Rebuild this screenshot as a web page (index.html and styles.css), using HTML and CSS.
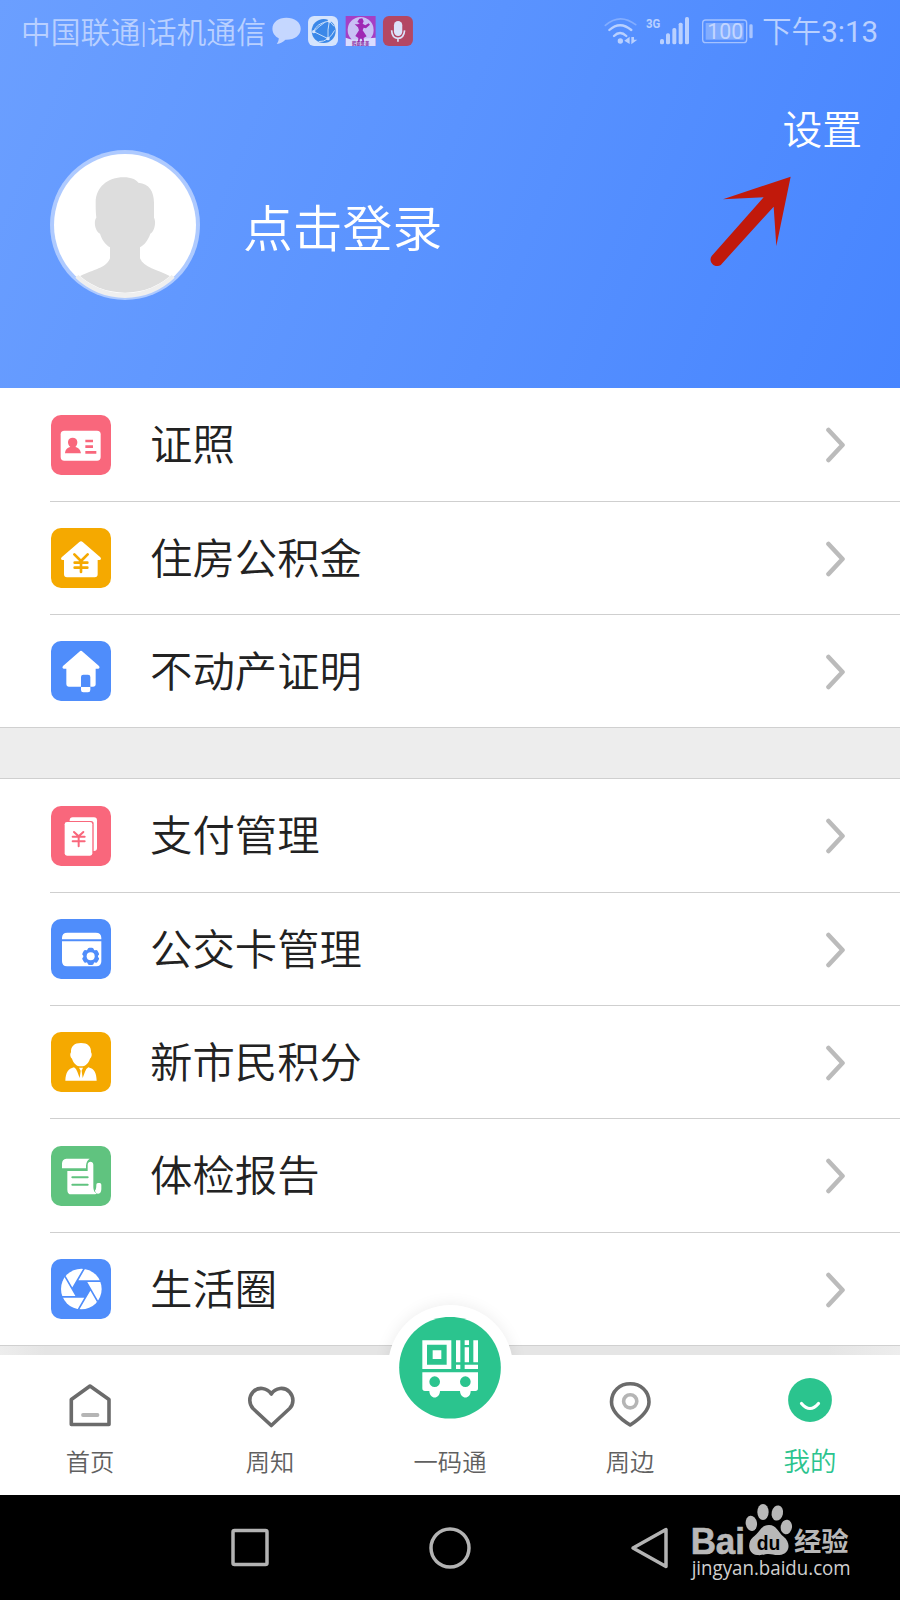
FILE: index.html
```html
<!DOCTYPE html>
<html lang="zh-CN">
<head>
<meta charset="utf-8">
<title>我的</title>
<link rel="stylesheet" href="styles.css">
</head>
<body>
<svg width="0" height="0" class="defs">
  <symbol id="chevron" viewBox="0 0 20 36"><path d="M2.500 3 L16.500 18 L2.500 33" fill="none" stroke="#bbb" stroke-width="4.600" stroke-linecap="round" stroke-linejoin="round"/></symbol>
</svg>
<div class="screen">
  <header class="header">
    <div class="status">
      <span class="carrier">中国联通|话机通信</span>
      <svg class="notices" viewBox="0 0 435 100">
        <path d="M43 5C19 5 1 19 1 38c0 13 8 23 19 29 0 8-3 13-6 17 11-2 20-6 26-13 27 1 46-13 46-33S67 5 43 5z" fill="#c5d7ff"/>
        <rect x="108" y="0" width="90" height="90" rx="18" fill="#d5e4fd"/>
        <circle cx="155" cy="45" r="36" fill="#3b88e8"/>
        <path d="M125 47 Q132 22 172 15 M125 47 L168 68 M172 15 Q166 42 168 68 M125 47 Q140 31 160 18 M168 68 Q180 58 188 43 M140 77 Q155 78 168 68 M172 15 L186 31" fill="none" stroke="#c5ddfa" stroke-width="3"/>
        <g fill="#d5e4fd"><circle cx="125" cy="47" r="5"/><circle cx="172" cy="15" r="5"/><circle cx="168" cy="68" r="5"/></g>
        <rect x="221" y="0" width="90" height="90" fill="#a63fc4"/>
        <circle cx="266" cy="42" r="39" fill="#c9c0f5"/>
        <path d="M221 65 Q240 74 266 70 T311 65 V90 H221Z" fill="#dadcff"/>
        <path d="M262 8 L271 7 L275 16 L272 23 L280 28 L290 22 L294 26 L282 37 L275 35 L272 43 L284 61 L275 66 L276 78 H272 L269 68 H264 L262 78 H258 L259 66 L250 60 L261 43 L258 34 L248 25 L258 25 L263 22 L256 18Z" fill="#9f28b4"/>
        <text x="240" y="86" class="badge-text">韩亚医美</text>
        <rect x="333" y="0" width="90" height="90" rx="18" fill="#b44763"/>
        <rect x="366" y="15" width="25" height="45" rx="12.5" fill="#dce3fa"/>
        <path d="M359 43 Q360 67 378 67 T398 43 M378 67 V77" fill="none" stroke="#dce3fa" stroke-width="5"/>
      </svg>
      <svg class="signals" viewBox="0 0 450 90">
        <g fill="none" stroke="#b9d0ff" stroke-width="7" stroke-linecap="round">
          <path d="M4 28 Q48 -10 95 26" stroke="#83adff" stroke-width="5"/>
          <path d="M16 42 Q48 13 82 42"/><path d="M30 60 Q48 42 67 60"/>
        </g>
        <circle cx="49" cy="75" r="8" fill="#b9d0ff"/>
        <path d="M61 74 L77 62 V84Z M82 63 V85 L100 71 L90 71 V63Z" fill="#b9d0ff"/>
        <text x="126" y="36" class="net" textLength="43" lengthAdjust="spacingAndGlyphs">3G</text>
        <g fill="#b9d0ff"><rect x="168" y="69" width="12" height="16" rx="5"/><rect x="186" y="52" width="12" height="33" rx="5"/><rect x="205" y="36" width="12" height="49" rx="5"/><rect x="224" y="20" width="12" height="65" rx="5"/><rect x="243" y="3" width="12" height="82" rx="5"/></g>
        <rect x="296" y="12" width="132" height="68" rx="9" fill="none" stroke="#a4c2ff" stroke-width="4"/>
        <rect x="305" y="21" width="114" height="50" fill="#82adff"/>
        <rect x="436" y="25" width="10" height="42" rx="4" fill="#a9c5ff"/>
        <text x="310" y="70" class="battery" textLength="108" lengthAdjust="spacingAndGlyphs">100</text>
      </svg>
      <span class="time">下午3:13</span>
    </div>
    <div class="settings">设置</div>
    <div class="profile">
      <svg class="avatar" viewBox="60 60 450 450">
        <defs><clipPath id="face"><circle cx="285" cy="280" r="208"/></clipPath></defs>
        <circle cx="285" cy="285" r="225" fill="#aecaff"/>
        <circle cx="285" cy="285" r="213" fill="#fff"/>
        <path clip-path="url(#face)" d="M281 142C305 142 317 149 325 158C358 161 372 185 372 218V263C379 274 374 306 361 311C354 331 344 344 330 352V385C341 413 382 419 419 438L470 520H100L151 438C190 418 229 415 240 385V352C225 343 215 327 210 311C195 303 190 274 199 263C197 247 197 230 197 217C198 172 232 142 281 142Z" fill="#ddd"/>
        <path d="M145 435A208 208 0 0 0 425 435L434 443A213 213 0 0 1 136 443Z" fill="#efefef"/>
      </svg>
      <span class="login">点击登录</span>
    </div>
    <svg class="arrow" viewBox="355 525 255 280"><path d="M603 530L400 598L522 592L366 768C354 784 375 808 394 794L552 620L560 738Z" fill="#c1190b"/></svg>
  </header>

  <main>
    <section class="group">
      <div class="row">
        <svg class="icon pink" viewBox="0 0 180 180"><rect x="29" y="47" width="120" height="90" rx="11" fill="#fff"/><path d="M42 115C43 103 49 98 58 96C47 86 49 68 65 68S83 86 73 96C82 98 88 103 90 115Z M103 74h23v8h-23z M103 91h23v8h-23z M103 108h33v8h-33z" fill="#f9677c"/></svg>
        <div class="label">证照</div><svg class="chevron"><use href="#chevron"/></svg>
      </div>
      <div class="row">
        <svg class="icon orange" viewBox="0 0 180 180"><path d="M85 42Q90 37 95 42L148 88Q153 95 145 96H140V139Q140 148 131 148H48Q39 148 39 139V96H35Q27 95 32 88Z" fill="#fff"/><path d="M70 79L90 99L110 79M90 99V132M71 104H109M71 119H109" fill="none" stroke="#f5a900" stroke-width="8" stroke-linecap="round"/></svg>
        <div class="label">住房公积金</div><svg class="chevron"><use href="#chevron"/></svg>
      </div>
      <div class="row">
        <svg class="icon blue" viewBox="0 0 180 180"><path d="M85 32Q90 27 95 32L144 75Q148 82 142 83H134V130Q134 137 126 137H118V108Q118 101 111 101H97Q90 101 90 108V137H53Q46 137 46 130V83H38Q32 82 36 75Z M90 138H118V147Q118 154 111 154H97Q90 154 90 147Z" fill="#fff"/></svg>
        <div class="label">不动产证明</div><svg class="chevron"><use href="#chevron"/></svg>
      </div>
    </section>
    <section class="group second">
      <div class="row">
        <svg class="icon pink" viewBox="0 0 180 180"><rect x="56" y="34" width="82" height="101" rx="9" fill="#fff"/><rect x="38" y="45" width="90" height="107" rx="8" fill="#f9677c"/><rect x="41" y="48" width="83" height="101" rx="7" fill="#fff"/><path d="M69 78L83 91L97 78M83 91V121M65 92H101M65 106H101" fill="none" stroke="#f9677c" stroke-width="6" stroke-linecap="round"/></svg>
        <div class="label">支付管理</div><svg class="chevron"><use href="#chevron"/></svg>
      </div>
      <div class="row">
        <svg class="icon blue" viewBox="0 0 180 180"><path d="M33 61V57Q33 41 49 41H134Q151 41 151 57V61Z M33 67H151V127Q151 142 136 142H48Q33 142 33 127Z" fill="#fff"/><g fill="#4f8dfb"><circle cx="119" cy="112" r="22"/><rect x="110" y="86" width="18" height="52" rx="5"/><rect x="110" y="86" width="18" height="52" rx="5" transform="rotate(60 119 112)"/><rect x="110" y="86" width="18" height="52" rx="5" transform="rotate(120 119 112)"/></g><circle cx="119" cy="112" r="12" fill="#fff"/></svg>
        <div class="label">公交卡管理</div><svg class="chevron"><use href="#chevron"/></svg>
      </div>
      <div class="row">
        <svg class="icon orange" viewBox="0 0 180 180"><path d="M90 33C110 33 121 43 120 61C124 66 122 77 117 80C112 94 104 103 90 103S68 94 63 80C58 77 56 66 60 61C59 43 70 33 90 33Z M69 106Q76 110 79 119L86 138L89 116L84 107H96L92 116L95 138L102 119Q105 110 112 106C130 110 136 122 137 146H43C44 123 51 110 69 106Z" fill="#fff"/></svg>
        <div class="label">新市民积分</div><svg class="chevron"><use href="#chevron"/></svg>
      </div>
      <div class="row tall">
        <svg class="icon green" viewBox="0 0 180 180"><path d="M46 38H116Q106 44 105 59V67H33V53Q33 40 46 38Z M49 75H110V56C110 44 127 44 127 56V124Q127 138 137 143Q133 145 127 145H61Q49 145 49 131Z M136 116Q136 111 141 111H146Q151 111 151 116V130C151 148 132 147 132 133Q136 130 136 116Z" fill="#fff"/><path d="M64 94H110M64 116H110" stroke="#60c37f" stroke-width="6" stroke-linecap="round"/></svg>
        <div class="label">体检报告</div><svg class="chevron"><use href="#chevron"/></svg>
      </div>
      <div class="row">
        <svg class="icon blue" viewBox="0 0 180 180"><circle cx="91" cy="90" r="61" fill="#fff"/><path d="M118 90L104.500 66.600H77.500L64 90L77.500 113.400H104.500Z" fill="#4f8dfb"/><path d="M64 90L100 28M77.500 66.600H151M104.500 66.600L140 128M118 90L82 152M104.500 113.400H31M77.500 113.400L42 52" stroke="#4f8dfb" stroke-width="5"/></svg>
        <div class="label">生活圈</div><svg class="chevron"><use href="#chevron"/></svg>
      </div>
    </section>
  </main>

  <div class="strip"></div>
  <div class="bump"></div>
  <nav class="tabs">
    <div class="tab"><svg class="tab-icon" viewBox="0 0 60 60"><path d="M30 11L49 24.500V49.500H11.300V24.500Z" fill="none" stroke="#6b6b6b" stroke-width="3.600" stroke-linejoin="round"/><path d="M23 40H37.500" stroke="#b5b5b5" stroke-width="3.800" stroke-linecap="round"/></svg><span>首页</span></div>
    <div class="tab"><svg class="tab-icon" viewBox="0 0 60 60"><path d="M31.300 19C27 12.500 18 11.500 13 17C8.500 22 9 29 13 33.500L31.300 50.500L49.600 33.500C54 29 54 22 49.600 17C44.500 11.500 35.500 12.500 31.300 19Z" fill="none" stroke="#6b6b6b" stroke-width="3.600" stroke-linejoin="round"/></svg><span>周知</span></div>
    <div class="tab"><svg class="bus" viewBox="87 80 306 306">
      <circle cx="240" cy="232" r="152.500" fill="#2bc48e"/>
      <path fill-rule="evenodd" fill="#fff" d="M157 150H244V236H157Z M171 163V223H230V163Z"/>
      <path fill="#fff" d="M188 180h26v26h-26z M258 150h13v66h-13z M284 150h13v14h-13z M284 171h13v45h-13z M310 150h14v66h-14z M258 223h13v13h-13z M284 223h40v13h-40z"/>
      <path fill-rule="evenodd" fill="#fff" d="M157 246H324V294Q324 302 316 302H302C302 328 271 328 270 302H210C209 328 179 328 178 302H165Q157 302 157 294Z M210 274A16 16 0 1 0 178 274A16 16 0 1 0 210 274Z M302 274A16 16 0 1 0 270 274A16 16 0 1 0 302 274Z"/>
    </svg><span>一码通</span></div>
    <div class="tab"><svg class="tab-icon" viewBox="0 0 60 60"><path d="M30.200 50C22 45 11.500 37 11.500 27C11.500 16 20 8.800 30.200 8.800S49 16 49 27C49 37 38 45 30.200 50Z" fill="none" stroke="#6b6b6b" stroke-width="3.600" stroke-linejoin="round"/><circle cx="30.200" cy="26.300" r="6.600" fill="none" stroke="#b5b5b5" stroke-width="3.600"/></svg><span>周边</span></div>
    <div class="tab active"><svg class="tab-icon" viewBox="0 0 60 60"><circle cx="30" cy="25" r="21.900" fill="#2bc48e"/><path d="M21.500 28.500Q30 38.500 38.500 28.500" fill="none" stroke="#fff" stroke-width="3.200" stroke-linecap="round"/></svg><span>我的</span></div>
  </nav>

  <footer class="sysnav">
    <svg viewBox="0 0 44 44"><rect x="5" y="4.500" width="34" height="34" rx="1.500"/></svg>
    <svg viewBox="0 0 44 44"><circle cx="22" cy="22" r="19"/></svg>
    <svg viewBox="0 0 44 44"><path d="M5 22L38 3.500V40.500Z" stroke-linejoin="round"/></svg>
    <svg class="watermark" viewBox="0 0 540 285">
      <g fill="#b8b8b8"><ellipse cx="214" cy="85" rx="17" ry="23" transform="rotate(-8 214 85)"/><ellipse cx="249" cy="51" rx="17" ry="24"/><ellipse cx="292" cy="54" rx="17" ry="23" transform="rotate(12 292 54)"/><ellipse cx="319" cy="96" rx="17" ry="22" transform="rotate(8 319 96)"/>
      <path d="M267 90C290 90 294 112 311 125C334 143 330 178 298 180C283 181 277 177 266 177S246 182 231 180C202 176 202 141 219 127C240 111 243 90 267 90Z"/></g>
      <text x="32" y="177" class="bai" textLength="163" lengthAdjust="spacingAndGlyphs">Bai</text>
      <text x="230" y="164" class="du" textLength="71" lengthAdjust="spacingAndGlyphs">du</text>
      <text x="342" y="169" class="jy" textLength="164" lengthAdjust="spacingAndGlyphs">经验</text>
      <text x="35" y="240" class="url" textLength="477" lengthAdjust="spacingAndGlyphs">jingyan.baidu.com</text>
    </svg>
  </footer>
</div>
</body>
</html>
```
FILE: styles.css
```css
* { box-sizing: border-box; }
body { margin: 0; font-family: Roboto, "Noto Sans CJK SC", sans-serif; font-weight: 350; color: #222; }
svg { display: block; flex: none; }
.defs { position: absolute; }
.screen { position: relative; width: 900px; height: 1600px; background: #ededed; overflow: hidden; display: flex; flex-direction: column; }

.header { position: relative; height: 388px; flex: none; background: linear-gradient(112deg, #6b9fff 0%, #5a93ff 48%, #4785ff 100%); color: #fff; }
.status { height: 62px; padding: 0 20px 0 21px; display: flex; align-items: center; color: #b9d0ff; white-space: nowrap; }
.carrier { font-size: 29.8px; line-height: 60px; width: 251px; padding-top: 3px; }
.notices { width: 145px; height: 33.3px; margin-top: 3px; }
.signals { width: 150px; height: 30px; margin-left: 187px; }
.time { font-size: 29.6px; line-height: 60px; margin-left: 8px; padding-top: 2px; font-weight: 400; }
.time { font-family: Roboto, "Noto Sans CJK SC DemiLight", "Noto Sans CJK SC", sans-serif; }
.net { font: bold 38px Roboto, sans-serif; fill: #b9d0ff; }
.battery { font: 66px Roboto, sans-serif; fill: #c3d6ff; }
.badge-text { font: bold 13px "Noto Sans CJK SC", sans-serif; fill: #8b2ba0; }
.settings { height: 78px; line-height: 78px; margin-top: 30px; padding-right: 38px; text-align: right; font-size: 39.8px; }
.profile { display: flex; align-items: center; height: 150px; margin-top: -20px; padding-left: 50px; gap: 43px; }
.avatar { width: 150px; height: 150px; }
.login { font-size: 49.8px; line-height: 70px; padding-top: 9px; }
.arrow { position: absolute; left: 708px; top: 175px; width: 85px; height: 93.3px; }

.group { background: #fff; padding-left: 50px; border-bottom: 1px solid #d0d0d0; }
.second { margin-top: 50px; border-top: 1px solid #cfcfcf; }
.row { height: 113px; display: flex; align-items: center; padding: 0 54px 0 1px; border-bottom: 1px solid #cfcfcf; }
.row:first-child, .row.tall { height: 114px; }
.row:last-child { height: 112px; border-bottom: 0; }
.icon { width: 60px; height: 60px; border-radius: 10px; }
.pink { background: #f9677c; }
.orange { background: #f5a900; }
.blue { background: #4f8dfb; }
.green { background: #60c37f; }
.label { flex: 1; margin-left: 39px; padding-top: 3px; font-size: 42.4px; line-height: 62px; }
.chevron { width: 20px; height: 36px; margin-top: 1px; }

.strip { height: 9px; flex: none; background: linear-gradient(90deg, #ededed, #e5e5e5 5%, #e5e5e5 92%, #ededed); }
.bump { position: absolute; left: 387.500px; top: 1304.700px; width: 125px; height: 125px; border-radius: 50%; background: #fff; box-shadow: 0 0 16px rgba(0, 0, 0, .08); }
.tabs { position: relative; height: 140px; flex: none; display: grid; grid-template-columns: repeat(5, 180px); background: #fff; }
.tab { display: flex; flex-direction: column; align-items: center; padding-top: 20px; font-size: 24.300px; color: #606060; }
.tab span { line-height: 36px; margin-top: 10px; }
.tab-icon { width: 60px; height: 60px; }
.bus { width: 102px; height: 102px; margin: -58.500px 0 16.500px; }
.active { color: #2bc48e; font-size: 26.500px; }
.active span { margin-top: 9px; }

.sysnav { position: relative; flex: none; height: 105px; background: #000; display: flex; justify-content: center; align-items: center; gap: 156px; }
.sysnav > svg { width: 44px; height: 44px; fill: none; stroke: #b3b3b3; stroke-width: 3.500; }
.sysnav > .watermark { position: absolute; left: 680px; top: 0; width: 180px; height: 95px; stroke: none; }
.bai { font: bold 110px "Liberation Sans", sans-serif; fill: #b8b8b8; stroke: #b8b8b8; stroke-width: 2; }
.du { font: bold 62px "Liberation Sans", sans-serif; fill: #000; }
.jy { font: bold 80px "Noto Sans CJK SC", sans-serif; fill: #b8b8b8; }
.url { font: 58px "Open Sans", sans-serif; fill: #d0d0d0; }
```
